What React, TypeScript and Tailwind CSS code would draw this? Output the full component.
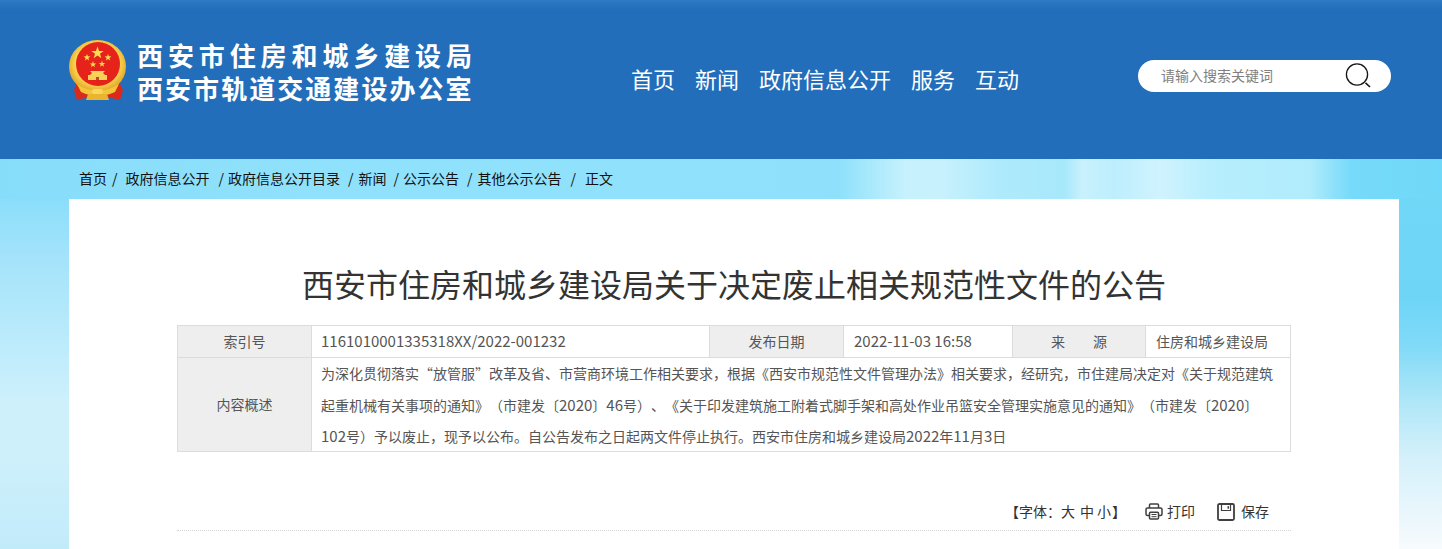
const crumbs = [
  { text: "首页", sepClass: "ml-[5px] mr-[8px]", sep: "/" },
  { text: "政府信息公开", sepClass: "ml-[9px] mr-[4px]", sep: "/" },
  { text: "政府信息公开目录", sepClass: "ml-[8px] mr-[5px]", sep: "/" },
  { text: "新闻", sepClass: "ml-[7px] mr-[4px]", sep: "/" },
  { text: "公示公告", sepClass: "ml-[8px] mr-[5px]", sep: "/" },
  { text: "其他公示公告", sepClass: "ml-[9px] mr-[9px]", sep: "/" },
  { text: "正文", sepClass: "", sep: "" },
];

const nav = ["首页", "新闻", "政府信息公开", "服务", "互动"];

function starPoints(cx: number, cy: number, r: number) {
  const pts: string[] = [];
  for (let i = 0; i < 10; i++) {
    const rad = i % 2 === 0 ? r : r * 0.4;
    const a = (Math.PI / 5) * i - Math.PI / 2;
    pts.push(`${(cx + rad * Math.cos(a)).toFixed(2)},${(cy + rad * Math.sin(a)).toFixed(2)}`);
  }
  return pts.join(" ");
}

function Emblem() {
  return (
    <svg width="58" height="62" viewBox="0 0 58 62" className="shrink-0">
      <defs>
        <radialGradient id="gold" cx="50%" cy="45%" r="55%">
          <stop offset="0.7" stopColor="#fbd651" />
          <stop offset="1" stopColor="#dfa024" />
        </radialGradient>
      </defs>
      {/* drapes */}
      <path d="M8 42 L5 50 L8 60 L20 57 L38 57 L51 60 L54 50 L50 42 L40 50 H18 Z" fill="#d92a1c" />
      <ellipse cx="28.5" cy="26.5" rx="28.5" ry="26.5" fill="url(#gold)" />
      <circle cx="29" cy="24" r="22" fill="#e6231b" />
      <polygon points={starPoints(28.5, 13, 6.5)} fill="#fbdc4e" />
      <polygon points={starPoints(18, 17.5, 3.6)} fill="#fbdc4e" />
      <polygon points={starPoints(39, 17.5, 3.6)} fill="#fbdc4e" />
      <polygon points={starPoints(24, 24.5, 3.4)} fill="#fbdc4e" />
      <polygon points={starPoints(33, 24, 3.4)} fill="#fbdc4e" />
      {/* gate */}
      <path d="M23 33 L21 31 H36 L34 33 L36 35 H21 Z" fill="#f7d35a" />
      <rect x="19" y="35" width="19" height="5" fill="#f6cf57" />
      <rect x="27" y="37" width="3" height="3" fill="#b5521c" />
      {/* wheel and ribbon */}
      <path d="M8 44 Q28.5 58 50 44 L46 52 Q28.5 60 12 52 Z" fill="#f4c53c" />
      <path d="M19 54 H38 L40 60 H17 Z" fill="#e9b52e" />
      <rect x="23" y="49" width="11" height="5" rx="2.5" fill="#f9d75a" />
    </svg>
  );
}

function SearchIcon() {
  return (
    <svg width="26" height="26" viewBox="0 0 26 26" fill="none" stroke="#161616" className="shrink-0">
      <circle cx="12" cy="11.5" r="10.6" strokeWidth="1.3" />
      <path d="M20.5 19.8 L25 24" strokeWidth="1.6" />
    </svg>
  );
}

function PrintIcon() {
  return (
    <svg width="18" height="17" viewBox="0 0 18 17" fill="none" stroke="#3f3f3f" strokeWidth="1.5" className="shrink-0">
      <path d="M4.5 5 V2 Q4.5 1 5.5 1 H12.5 Q13.5 1 13.5 2 V5" />
      <path d="M4 12.5 H2.5 Q1 12.5 1 11 V6.5 Q1 5 2.5 5 H15.5 Q17 5 17 6.5 V11 Q17 12.5 15.5 12.5 H14" />
      <rect x="4.5" y="9.2" width="9" height="6.8" rx="1" />
      <path d="M6.5 11.5 H11.5 M6.5 13.7 H11.5" strokeWidth="1" />
    </svg>
  );
}

function SaveIcon() {
  return (
    <svg width="18" height="18" viewBox="0 0 18 18" fill="none" stroke="#3f3f3f" className="shrink-0">
      <rect x="1" y="1" width="16" height="16" rx="1.5" strokeWidth="1.8" />
      <path d="M4.5 1.5 V7.5 H13.5 V1.5" strokeWidth="1.2" />
      <rect x="10.5" y="3.2" width="1.5" height="2.5" fill="#3f3f3f" stroke="none" />
    </svg>
  );
}

function Num({ children }: { children: string }) {
  return <span className="text-[15px]">{children}</span>;
}

export default function App() {
  return (
    <div className="h-[549px] overflow-hidden font-['Noto_Sans_CJK_SC','Liberation_Sans',sans-serif] [background:linear-gradient(180deg,#84dcfa_159px,#8bdefa_200px,#a5e3fa_260px,#b5e9fb_320px,#cdf0fc_400px,#cdf0fb_460px,#c2ebfa_549px)_left/50%_100%_no-repeat,linear-gradient(180deg,#72d8f8_159px,#6fd5f7_300px,#80daf7_345px,#aee6f8_400px,#d3f0fa_455px,#f7fbfd_549px)_right/50%_100%_no-repeat]">
      {/* Header */}
      <header className="h-[159px] bg-[linear-gradient(180deg,#2f7bc5_0px,#2673bf_5px,#226eba_10px)]">
        <div className="flex items-start pl-[69px] pt-[40px]">
          <Emblem />
          <div className="ml-[10px] text-white font-bold text-[26px] leading-[33px] -mt-[2px] w-[340px]">
            <div className="tracking-[4.9px] whitespace-nowrap">西安市住房和城乡建设局</div>
            <div className="tracking-[2.05px] whitespace-nowrap">西安市轨道交通建设办公室</div>
          </div>
          <nav className="flex gap-[20px] ml-[154px] mt-[22px] text-white text-[22px] leading-[32px]">
            {nav.map((item) => (
              <a key={item} className="whitespace-nowrap">{item}</a>
            ))}
          </nav>
          <div className="ml-auto mr-[51px] mt-[20px] w-[253px] h-[32px] bg-white rounded-full flex items-center pl-[23px] pr-[20px] justify-between">
            <span className="text-[14px] text-[#808080] whitespace-nowrap pb-[2px]">请输入搜索关键词</span>
            <SearchIcon />
          </div>
        </div>
      </header>

      {/* Breadcrumb */}
      <div className="h-[40px] pl-[79px] pb-[2px] flex items-center text-[14px] text-[#111] bg-[linear-gradient(90deg,#86ddfa_0px,#90e1fb_300px,#90e1fb_640px,#8fe1fb_840px,#c6f1fd_905px,#c8f1fd_940px,#aeeafc_1000px,#a8e8fb_1065px,#c8f1fc_1082px,#bdeefd_1115px,#d0f3fd_1160px,#b8eefd_1210px,#b0ecfc_1310px,#90e2fa_1332px,#76dafa_1352px,#70d8f8_1442px)]">
        {crumbs.map((c) => (
          <span key={c.text} className="whitespace-nowrap">
            {c.text}
            {c.sep && <span className={c.sepClass}>{c.sep}</span>}
          </span>
        ))}
      </div>

      {/* Article */}
      <main className="ml-[69px] w-[1330px] bg-white px-[108px] pt-[62px] h-[350px]">
        <h1 className="text-[32px] leading-[48px] -mt-[2px] text-[#333] text-center font-normal whitespace-nowrap">
          西安市住房和城乡建设局关于决定废止相关规范性文件的公告
        </h1>
        <div className="mt-[18px] border border-[#dcdcdc] text-[14px] text-[#555] w-[1114px]">
          <div className="flex h-[32px] border-b border-[#dcdcdc]">
            <div className="w-[134px] bg-[#eeeeee] border-r border-[#dcdcdc] flex items-center justify-center">索引号</div>
            <div className="w-[397px] pl-[9px] flex items-center text-[15px]">1161010001335318XX/2022-001232</div>
            <div className="w-[135px] bg-[#eeeeee] border-x border-[#dcdcdc] flex items-center justify-center">发布日期</div>
            <div className="w-[168px] pl-[10px] flex items-center text-[15px]">2022-11-03 16:58</div>
            <div className="w-[134px] bg-[#eeeeee] border-x border-[#dcdcdc] flex items-center justify-center whitespace-pre">来　　源</div>
            <div className="pl-[10px] flex items-center">住房和城乡建设局</div>
          </div>
          <div className="flex h-[93px]">
            <div className="w-[134px] bg-[#eeeeee] border-r border-[#dcdcdc] flex items-center justify-center">内容概述</div>
            <div className="flex-1 pl-[9px] leading-[31px] [text-spacing-trim:space-all]">
              <div className="whitespace-nowrap h-[31px]">为深化贯彻落实“放管服”改革及省、市营商环境工作相关要求，根据《西安市规范性文件管理办法》相关要求，经研究，市住建局决定对《关于规范建筑</div>
              <div className="whitespace-nowrap h-[31px]">起重机械有关事项的通知》（市建发〔<Num>2020</Num>〕<Num>46</Num>号）、《关于印发建筑施工附着式脚手架和高处作业吊篮安全管理实施意见的通知》（市建发〔<Num>2020</Num>〕</div>
              <div className="whitespace-nowrap h-[31px]"><Num>102</Num>号）予以废止，现予以公布。自公告发布之日起两文件停止执行。西安市住房和城乡建设局<Num>2022</Num>年<Num>11</Num>月<Num>3</Num>日</div>
            </div>
          </div>
        </div>
        <div className="mt-[49px] h-[30px] border-b border-dotted border-[#d5d5d5] flex items-start text-[14px] text-[#333] w-[1114px] [text-spacing-trim:space-all]">
          <span className="ml-[828px] whitespace-nowrap">
            【字体：大<span className="ml-[5px]">中</span><span className="ml-[3px]">小</span><span className="ml-[1px]">】</span>
          </span>
          <span className="flex items-center ml-[19px] gap-[4px] whitespace-nowrap"><PrintIcon />打印</span>
          <span className="flex items-center ml-[22px] gap-[6px] whitespace-nowrap"><SaveIcon />保存</span>
        </div>
      </main>
    </div>
  );
}
